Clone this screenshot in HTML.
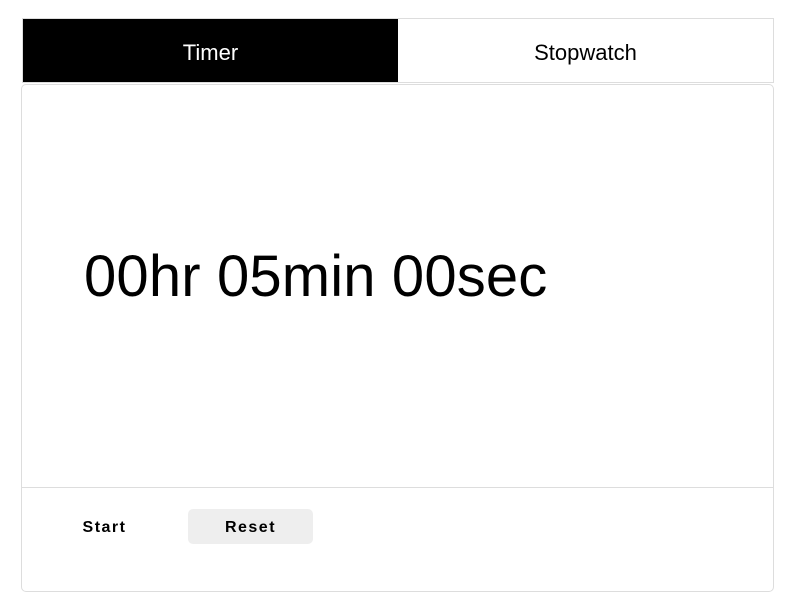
<!DOCTYPE html>
<html><head><style>
html,body{margin:0;padding:0;background:#fff;width:798px;height:610px;overflow:hidden;font-family:"Liberation Sans",sans-serif}
.tabs{position:absolute;left:22px;top:18px;width:750px;height:63px;border:1px solid #ddd;display:flex}
.tab{flex:0 0 375px;height:63px;line-height:67px;text-align:center;font-size:22px;color:#000}
.tab.a{background:#000;color:#fff}
.tab.b{flex:1}
.card{position:absolute;left:21px;top:84px;width:751px;height:506px;border:1px solid #ddd;border-radius:5px}
.time{position:absolute;left:62px;top:158px;font-size:58px;letter-spacing:0.15px;color:#000;white-space:nowrap}
.div{position:absolute;left:0;right:0;top:402px;border-top:1px solid #ddd}
.btn{position:absolute;top:424px;height:35px;line-height:37px;text-align:center;font-weight:bold;font-size:16px;letter-spacing:1.5px;border-radius:5px}
.start{left:40px;width:85px}
.reset{left:166px;width:125px;background:#eee}
</style></head><body>
<div class="tabs"><div class="tab a">Timer</div><div class="tab b">Stopwatch</div></div>
<div class="card">
<div class="time">00hr 05min 00sec</div>
<div class="div"></div>
<div class="btn start">Start</div>
<div class="btn reset">Reset</div>
</div>
</body></html>
